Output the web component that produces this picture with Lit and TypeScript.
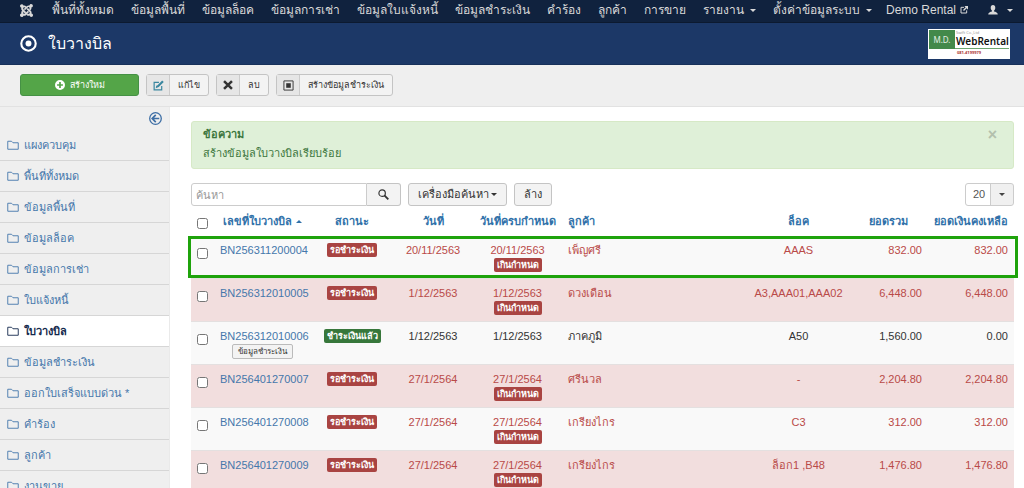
import { LitElement, html, svg, css, nothing } from 'lit';
import { customElement } from 'lit/decorators.js';
import { classMap } from 'lit/directives/class-map.js';

interface Invoice {
  no: string;
  date: string;
  customer: string;
  lock: string;
  total: string;
  remain: string;
  paid?: boolean;
}

const NAV = ['พื้นที่ทั้งหมด', 'ข้อมูลพื้นที่', 'ข้อมูลล็อค', 'ข้อมูลการเช่า', 'ข้อมูลใบแจ้งหนี้', 'ข้อมูลชำระเงิน', 'คำร้อง', 'ลูกค้า', 'การขาย'];
const NAV_MENUS = ['รายงาน', 'ตั้งค่าข้อมูลระบบ'];
const SIDE = ['แผงควบคุม', 'พื้นที่ทั้งหมด', 'ข้อมูลพื้นที่', 'ข้อมูลล็อค', 'ข้อมูลการเช่า', 'ใบแจ้งหนี้', 'ใบวางบิล', 'ข้อมูลชำระเงิน', 'ออกใบเสร็จแบบด่วน *', 'คำร้อง', 'ลูกค้า', 'งานขาย'];
const ACTIVE = 'ใบวางบิล';

const INVOICES: Invoice[] = [
  { no: 'BN256311200004', date: '20/11/2563', customer: 'เพ็ญศรี', lock: 'AAAS', total: '832.00', remain: '832.00' },
  { no: 'BN256312010005', date: '1/12/2563', customer: 'ดวงเดือน', lock: 'A3,AAA01,AAA02', total: '6,448.00', remain: '6,448.00' },
  { no: 'BN256312010006', date: '1/12/2563', customer: 'ภาคภูมิ', lock: 'A50', total: '1,560.00', remain: '0.00', paid: true },
  { no: 'BN256401270007', date: '27/1/2564', customer: 'ศรีนวล', lock: '-', total: '2,204.80', remain: '2,204.80' },
  { no: 'BN256401270008', date: '27/1/2564', customer: 'เกรียงไกร', lock: 'C3', total: '312.00', remain: '312.00' },
  { no: 'BN256401270009', date: '27/1/2564', customer: 'เกรียงไกร', lock: 'ล็อก1 ,B48', total: '1,476.80', remain: '1,476.80' },
];

const icon = (size: number, body: unknown) =>
  html`<svg width=${size} height=${size} viewBox="0 0 24 24" aria-hidden="true" fill="currentColor">${body}</svg>`;

const joomla = icon(13, svg`<path d="M16.719 14.759L14.22 17.26l-2.37 2.37-.462.466c-1.368 1.365-3.297 1.83-5.047 1.397-.327 1.424-1.604 2.49-3.13 2.49C1.44 23.983 0 22.547 0 20.772c0-1.518 1.055-2.789 2.469-3.123-.446-1.76.016-3.705 1.396-5.08l.179-.18 2.37 2.37-.184.181c-.769.779-.769 2.024 0 2.789.771.778 2.022.778 2.787 0l.465-.465 2.367-2.371 2.502-2.506 2.368 2.372zm.924 6.652c-1.822.563-3.885.12-5.328-1.318l-.18-.185 2.365-2.369.18.184c.771.768 2.018.765 2.787 0 .765-.765.77-2.01-.004-2.781l-.466-.465-2.365-2.37-2.502-2.503 2.37-2.369 2.499 2.505 2.367 2.37.464.464c1.365 1.36 1.846 3.278 1.411 5.021 1.56.224 2.759 1.56 2.759 3.18 0 1.784-1.439 3.21-3.209 3.21-1.545 0-2.851-1.096-3.135-2.565zM6.975 9.461L9.48 6.955l2.37-2.37.462-.461c1.365-1.365 3.3-1.83 5.031-1.396C17.566 1.166 18.93 0 20.557 0c1.771 0 3.21 1.44 3.21 3.212 0 1.631-1.2 2.977-2.775 3.18.405 1.733-.06 3.63-1.424 4.995l-.184.181-2.37-2.373.184-.181c.77-.765.77-2.016.005-2.781-.766-.766-2.01-.765-2.776 0l-.465.465-2.369 2.37-2.507 2.505L6.975 9.461zM6.842 10.005l-.466-.466c-.766-.765-.766-2.01 0-2.775.765-.765 2.005-.765 2.775 0l.179.181 2.363-2.374-.18-.18C10.131 3.009 8.168 2.545 6.402 2.999 6.078 1.572 4.798.507 3.273.507 1.501.507.063 1.947.063 3.72c0 1.514 1.055 2.784 2.467 3.12-.579 1.865-.13 3.996 1.335 5.461l2.835 2.8 2.505 2.505 2.37-2.37z"/>`);
const target = icon(17, svg`<circle cx="12" cy="12" r="10.200" fill="none" stroke="currentColor" stroke-width="3"/><circle cx="12" cy="12" r="4.200"/>`);
const plus = icon(10, svg`<path fill-rule="evenodd" d="M12 0a12 12 0 1 0 0 24 12 12 0 0 0 0-24zM10 5h4v5h5v4h-5v5h-4v-5H5v-4h5z"/>`);
const edit = icon(11, svg`<path d="M19 13v8.500H2.500V5H13" fill="none" stroke="currentColor" stroke-width="2.600"/><path d="M7 12.500l3-1L20 1l3.500 3.500-11 11L6 18z"/>`);
const cross = icon(10, svg`<path d="M2.500 2.500l19 19M21.500 2.500l-19 19" fill="none" stroke="currentColor" stroke-width="6"/>`);
const square = icon(11, svg`<path d="M2 2h20v20H2z" fill="none" stroke="currentColor" stroke-width="2"/><path d="M7 7h10v10H7z"/>`);
const folder = icon(12, svg`<path d="M1.500 20.500V4.500H9l3 3h10.500v13z" fill="none" stroke="currentColor" stroke-width="1.800"/>`);
const back = icon(13, svg`<circle cx="12" cy="12" r="10.700" fill="none" stroke="currentColor" stroke-width="2.400"/><path d="M12.500 5.500L6 12l6.500 6.500M6 12h13" fill="none" stroke="currentColor" stroke-width="3.200"/>`);
const search = icon(11, svg`<circle cx="9" cy="9" r="7" fill="none" stroke="currentColor" stroke-width="2.600"/><path d="M14 14l8.500 8.500" stroke="currentColor" stroke-width="4"/>`);
const external = icon(8, svg`<path d="M12 4H3v17h17v-8" fill="none" stroke="currentColor" stroke-width="3"/><path d="M13 0h11v11l-4-4-8 8-3-3 8-8z"/>`);
const user = icon(10, svg`<path d="M12 0c3.600 0 5.500 2.500 5.500 6.500 0 3-1.300 5.500-3 7v2c4 .8 9 2.500 9 7.500H.5c0-5 5-6.700 9-7.500v-2c-1.700-1.500-3-4-3-7C6.500 2.500 8.400 0 12 0z"/>`);

@customElement('app-root')
export class AppRoot extends LitElement {
  static styles = css`
    :host {
      display: block;
      height: 100vh;
      overflow: hidden;
      background: #fff;
      color: #444;
      font: 11px/15px 'Liberation Sans', Arial, sans-serif;
    }
    * { box-sizing: border-box; }
    a { color: #4577ab; text-decoration: none; }
    svg { display: block; flex: none; }
    button, input, select { font: inherit; color: inherit; margin: 0; }
    button { cursor: pointer; }
    .caret {
      display: inline-block;
      border: 3px solid transparent;
      border-top-color: currentColor;
      border-bottom: 0;
    }
    .caret.up { border-bottom: 3px solid currentColor; border-top: 0; vertical-align: middle; }

    .topnav {
      display: flex;
      align-items: center;
      gap: 17px;
      height: 23px;
      padding: 0 11px 2px 20px;
      background: #10223e;
      border-bottom: 1px solid #0c1a30;
      font-size: 12px;
      white-space: nowrap;
    }
    .topnav a { display: flex; align-items: center; color: #d9d9d9; }
    .topnav .brand { margin-right: 2px; }
    .topnav .menu { gap: 6px; }
    .topnav .menu + .menu { margin-right: -4px; }
    .topnav .site { gap: 4px; margin-left: auto; }
    .topnav .account { gap: 9px; margin-left: 3px; }

    .header {
      display: flex;
      align-items: center;
      justify-content: space-between;
      height: 42px;
      padding: 0 14px 0 20px;
      background: #1c3867;
      border-bottom: 1px solid #17305a;
      color: #fff;
    }
    .title { display: flex; align-items: center; gap: 11px; margin: 0; font-size: 16px; line-height: 24px; font-weight: 400; }
    .logo {
      display: grid;
      grid-template-columns: 26px 1fr;
      grid-template-rows: 19px 1fr;
      width: 82px;
      height: 30px;
      padding: 1px;
      background: #fff;
      font-family: 'Noto Sans', sans-serif;
    }
    .logo .md { background: #43894a; color: #e3efe4; font-size: 8px; line-height: 19px; text-align: center; }
    .logo .name { display: flex; flex-direction: column; padding-left: 1px; border-bottom: 1px solid #6ca56f; color: #111; font-size: 10px; line-height: 12px; font-weight: 600; }
    .logo small { color: #999; font-size: 4px; line-height: 5px; font-weight: 400; }
    .logo .tel { grid-column: 1 / 3; color: #a33; font-size: 4px; line-height: 8px; font-weight: 700; text-align: center; }

    .toolbar {
      display: flex;
      align-items: center;
      gap: 7px;
      height: 42px;
      padding: 0 20px 1px;
      background: #efefef;
      border-bottom: 1px solid #e2e2e2;
    }
    .btn {
      display: flex;
      align-items: center;
      justify-content: center;
      height: 23px;
      padding: 0 9px;
      border: 1px solid #c4c4c4;
      border-radius: 3px;
      background: #f3f3f3;
      color: #333;
      white-space: nowrap;
    }
    .tool { height: 22px; padding: 0; font-size: 9px; }
    .tool .ico { display: flex; align-items: center; justify-content: center; align-self: stretch; width: 23px; border-right: 1px solid #ccc; background: #e6e6e6; }
    .tool .txt { padding: 0 8px; }
    .tool .teal { color: #3a87a0; }
    .new { gap: 5px; width: 119px; border-color: #459145; background: #54a548; color: #fff; }

    .body { display: grid; grid-template-columns: 170px minmax(0, 1fr); }
    .side { background: #efefef; border-right: 1px solid #eaeaea; }
    .collapse { display: block; margin: 0 7px 0 auto; padding: 5px 0; border: 0; background: none; color: #3d6ea5; }
    .side ul { margin: 0; padding: 0; list-style: none; }
    .side li { border-bottom: 1px solid #d6d6d6; }
    .side li a { display: flex; align-items: center; gap: 5px; height: 30px; padding-left: 7px; }
    .side .sel a { background: #fff; color: #14294d; font-weight: 700; }

    .main { padding: 14px 10px 0 21px; }
    .alert {
      display: flex;
      align-items: flex-start;
      justify-content: space-between;
      height: 48px;
      padding: 3px 16px 0 11px;
      border: 1px solid #d6e9c6;
      border-radius: 3px;
      background: #dff0d8;
      color: #3c763d;
      line-height: 19px;
    }
    .alert h4, .alert p { margin: 0; font-size: 11px; }
    .close { padding: 0; border: 0; background: none; color: #b3c0ad; font-size: 16px; line-height: 19px; font-weight: 700; }

    .filters { display: flex; align-items: center; gap: 7px; margin-top: 14px; }
    .search { display: flex; }
    .search input {
      width: 176px;
      height: 23px;
      padding: 0 4px;
      border: 1px solid #ccc;
      border-radius: 3px 0 0 3px;
      background: #fff;
      outline: 0;
    }
    .search input::placeholder { color: #999; }
    .search .btn { width: 34px; padding: 0; border-left: 0; border-radius: 0 3px 3px 0; }
    .tools { gap: 2px; }
    .limit { position: relative; margin-left: auto; }
    .limit select {
      width: 49px;
      height: 23px;
      padding: 0 0 0 7px;
      border: 1px solid #ccc;
      border-radius: 3px;
      appearance: none;
      background: linear-gradient(90deg, #fff 24px, #ccc 24px, #ccc 25px, #f0f0f0 25px);
      color: #555;
    }
    .limit .caret { position: absolute; right: 9px; top: 10px; pointer-events: none; }

    table { width: 100%; border-collapse: separate; border-spacing: 0; table-layout: fixed; }
    th { height: 30px; padding: 0 6px; color: #3071a9; font-weight: 700; white-space: nowrap; }
    th a { color: inherit; }
    td { height: 43px; padding: 7px 6px 5px; border-bottom: 1px solid #e4e0e0; vertical-align: top; text-align: center; color: #b94a48; white-space: nowrap; }
    tbody tr { background: #f9f9f9; }
    tbody tr:nth-child(even) { background: #f2dede; }
    .paid td { color: #333; }
    .c-check { width: 23px; }
    .c-no { width: 97px; }
    .c-status { width: 82px; }
    .c-date { width: 80px; }
    .c-due { width: 89px; }
    .c-lock { width: 101px; }
    .c-total { width: 79px; }
    .c-remain { width: 86px; }
    td.left, th.left { text-align: left; }
    td.right, th.right { text-align: right; }
    td.tick, th.tick { padding-left: 0; padding-right: 0; }
    .tick input { display: block; width: 11px; height: 11px; margin: 5px auto 0; }
    .badge { display: block; width: fit-content; height: 14px; margin: 0 auto; padding: 0 3px; border-radius: 2px; background: #a94442; color: #fff; font-size: 9px; line-height: 14px; font-weight: 700; }
    .badge.ok { background: #37773b; }
    .mini { display: block; height: 15px; margin: 0 auto; padding: 0 5px; border: 1px solid #bbb; border-radius: 2px; background: #f3f3f3; color: #333; font-size: 8px; line-height: 13px; }
    .marked { position: relative; }
    .marked td:first-child::after {
      content: '';
      position: absolute;
      inset: 0 -4px 1px -3px;
      border: 3px solid #1fa30c;
      pointer-events: none;
    }
  `;

  private tool(ico: unknown, label: string, tone = '') {
    return html`<button class="btn tool"><span class="ico ${tone}">${ico}</span><span class="txt">${label}</span></button>`;
  }

  private row(r: Invoice, i: number) {
    const tone = classMap({ paid: !!r.paid, marked: i === 0, overdue: !r.paid && i > 0 });
    return html`<tr class=${tone}>
      <td class="tick"><input type="checkbox" aria-label=${r.no} /></td>
      <td><a href="#">${r.no}</a>${r.paid ? html`<button class="mini">ข้อมูลชำระเงิน</button>` : nothing}</td>
      <td><span class="badge ${r.paid ? 'ok' : ''}">${r.paid ? 'ชำระเงินแล้ว' : 'รอชำระเงิน'}</span></td>
      <td>${r.date}</td>
      <td>${r.date}${r.paid ? nothing : html`<span class="badge">เกินกำหนด</span>`}</td>
      <td class="left">${r.customer}</td>
      <td>${r.lock}</td>
      <td class="right">${r.total}</td>
      <td class="right">${r.remain}</td>
    </tr>`;
  }

  render() {
    return html`
      <nav class="topnav">
        <a class="brand" href="#" aria-label="Joomla">${joomla}</a>
        ${NAV.map((t) => html`<a href="#">${t}</a>`)}
        ${NAV_MENUS.map((t) => html`<a class="menu" href="#">${t}<span class="caret"></span></a>`)}
        <a class="site" href="#">Demo Rental ${external}</a>
        <a class="account" href="#" aria-label="User">${user}<span class="caret"></span></a>
      </nav>
      <header class="header">
        <h1 class="title">${target}ใบวางบิล</h1>
        <div class="logo">
          <span class="md">M.D.</span>
          <span class="name"><small>Swift Co.,Ltd</small>WebRental</span>
          <span class="tel">081-4199979</span>
        </div>
      </header>
      <div class="toolbar">
        <button class="btn tool new">${plus}สร้างใหม่</button>
        ${this.tool(edit, 'แก้ไข', 'teal')}
        ${this.tool(cross, 'ลบ')}
        ${this.tool(square, 'สร้างข้อมูลชำระเงิน')}
      </div>
      <div class="body">
        <aside class="side">
          <button class="collapse" aria-label="Toggle sidebar">${back}</button>
          <ul>
            ${SIDE.map((t) => html`<li class=${classMap({ sel: t === ACTIVE })}><a href="#">${folder}${t}</a></li>`)}
          </ul>
        </aside>
        <main class="main">
          <div class="alert">
            <div><h4>ข้อความ</h4><p>สร้างข้อมูลใบวางบิลเรียบร้อย</p></div>
            <button class="close" aria-label="Close">×</button>
          </div>
          <div class="filters">
            <div class="search">
              <input type="text" placeholder="ค้นหา" aria-label="ค้นหา" />
              <button class="btn" aria-label="Search">${search}</button>
            </div>
            <button class="btn tools">เครื่องมือค้นหา<span class="caret"></span></button>
            <button class="btn">ล้าง</button>
            <div class="limit">
              <select aria-label="Limit"><option>20</option></select>
              <span class="caret"></span>
            </div>
          </div>
          <table>
            <thead>
              <tr>
                <th class="c-check tick"><input type="checkbox" aria-label="Select all" /></th>
                <th class="c-no"><a href="#">เลขที่ใบวางบิล <span class="caret up"></span></a></th>
                <th class="c-status"><a href="#">สถานะ</a></th>
                <th class="c-date"><a href="#">วันที่</a></th>
                <th class="c-due"><a href="#">วันที่ครบกำหนด</a></th>
                <th class="left"><a href="#">ลูกค้า</a></th>
                <th class="c-lock">ล็อค</th>
                <th class="c-total"><a href="#">ยอดรวม</a></th>
                <th class="c-remain right"><a href="#">ยอดเงินคงเหลือ</a></th>
              </tr>
            </thead>
            <tbody>${INVOICES.map((r, i) => this.row(r, i))}</tbody>
          </table>
        </main>
      </div>
    `;
  }
}
